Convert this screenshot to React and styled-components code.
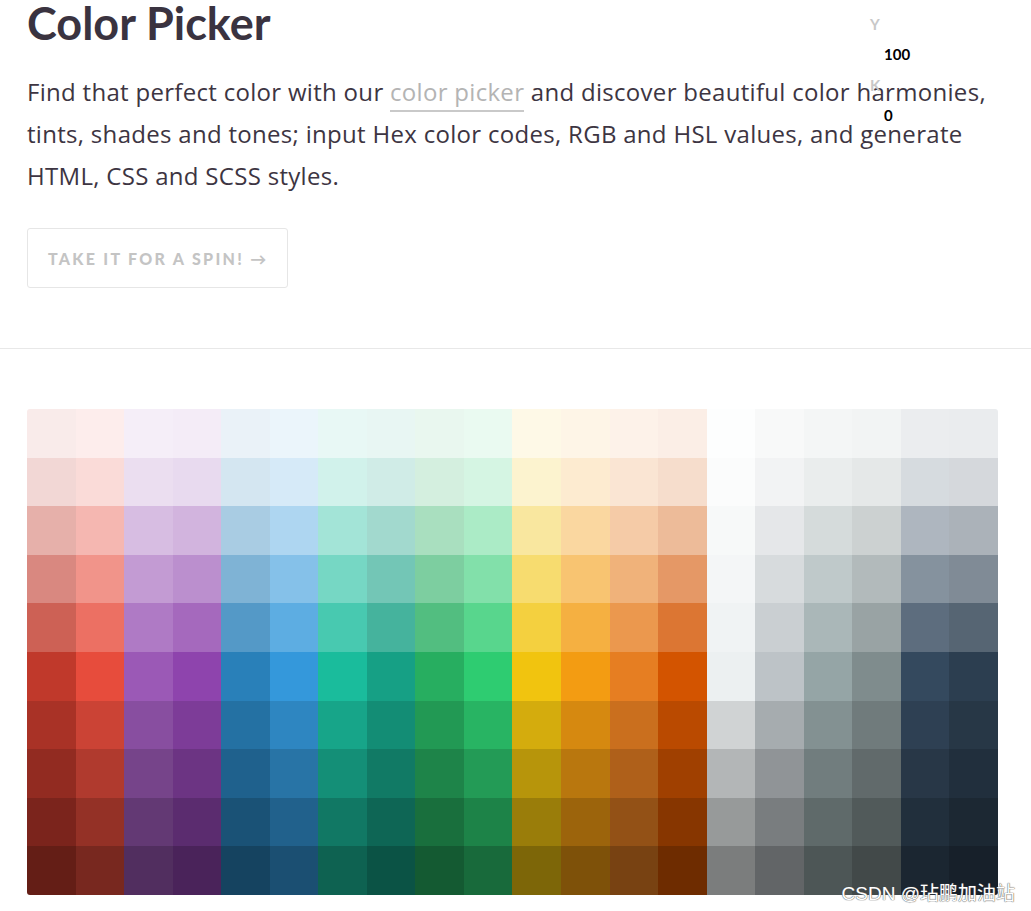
import React from 'react';
import styled, { createGlobalStyle } from 'styled-components';

const GlobalStyle = createGlobalStyle`
  html, body {
    margin: 0;
    padding: 0;
    background: #fff;
  }
  body {
    font-family: 'Open Sans', Lato, sans-serif;
    color: #3b3441;
    overflow: hidden;
  }
`;

// flat ui base colours, in the order shown on the page
const BASES = [
  '#c0392b', '#e74c3c', '#9b59b6', '#8e44ad', '#2980b9', '#3498db', '#1abc9c', '#16a085', '#27ae60', '#2ecc71',
  '#f1c40f', '#f39c12', '#e67e22', '#d35400', '#ecf0f1', '#bdc3c7', '#95a5a6', '#7f8c8d', '#34495e', '#2c3e50',
];

// 50..400 are tints toward white, 600..900 shades toward black
const STEPS = [
  { tint: 0.9 }, { tint: 0.8 }, { tint: 0.6 }, { tint: 0.4 }, { tint: 0.2 },
  { tint: 0 }, { shade: 0.88 }, { shade: 0.76 }, { shade: 0.64 }, { shade: 0.52 },
];

const mix = (hex, step) => {
  const n = parseInt(hex.slice(1), 16);
  const rgb = [(n >> 16) & 255, (n >> 8) & 255, n & 255].map(c =>
    step.shade ? Math.round(c * step.shade) : Math.round(c + (255 - c) * step.tint)
  );
  return `rgb(${rgb.join(',')})`;
};

// the CMYK readout that sticks out over the intro text
const CHANNELS = [
  { label: 'Y', value: '100' },
  { label: 'K', value: '0' },
];

export default function App() {
  return (
    <Page>
      <GlobalStyle />
      <Intro>
        <Title>Color Picker</Title>
        <Lead>
          Find that perfect color with our <Link>color picker</Link> and discover beautiful color harmonies,
          <br />
          tints, shades and tones; input Hex color codes, RGB and HSL values, and generate
          <br />
          HTML, CSS and SCSS styles.
        </Lead>
        <SpinButton>Take it for a spin! →</SpinButton>

        <Readout>
          {CHANNELS.map(ch => (
            <Channel key={ch.label}>
              <ChannelLabel>{ch.label}</ChannelLabel>
              <ChannelValue>{ch.value}</ChannelValue>
            </Channel>
          ))}
        </Readout>
      </Intro>

      <Divider />

      <Palette>
        <Swatches>
          {STEPS.map((step, r) =>
            BASES.map((base, c) => <Swatch key={`${r}-${c}`} style={{ background: mix(base, step) }} />)
          )}
        </Swatches>
        <Watermark>CSDN @玷鹏加油站</Watermark>
      </Palette>
    </Page>
  );
}

const Page = styled.div`
  width: 1031px;
  min-height: 911px;
  display: flex;
  flex-direction: column;
`;

const Intro = styled.section`
  position: relative;
  display: flex;
  flex-direction: column;
  align-items: flex-start;
  padding: 0 0 60px 27px;
`;

const Title = styled.h1`
  margin: 0;
  padding-top: 1px;
  font-family: Lato, sans-serif;
  font-size: 45px;
  line-height: 44px;
  font-weight: 700;
  color: #3a3340;
`;

const Lead = styled.p`
  margin: 26px 0 0;
  font-size: 24px;
  line-height: 42px;
  color: #3d3542;
  white-space: nowrap;
  letter-spacing: 0.3px;
`;

const Link = styled.span`
  color: #b4b4b4;
  border-bottom: 2px solid #c9c9c9;
  padding-bottom: 2px;
`;

const SpinButton = styled.button`
  display: flex;
  align-items: center;
  margin-top: 31px;
  height: 60px;
  width: 261px;
  padding: 0 0 0 20px;
  background: #fff;
  border: 1px solid #e6e6e6;
  border-radius: 3px;
  font-family: Lato, sans-serif;
  font-size: 16px;
  font-weight: 900;
  letter-spacing: 2.3px;
  text-transform: uppercase;
  color: #c4c4c4;
  cursor: pointer;
`;

const Readout = styled.div`
  position: absolute;
  top: 15px;
  left: 870px;
  display: flex;
  flex-direction: column;
  gap: 13px;
`;

const Channel = styled.div`
  display: flex;
  flex-direction: column;
  gap: 12px;
  font-family: Lato, sans-serif;
  font-weight: 700;
  font-size: 15px;
  line-height: 18px;
`;

const ChannelLabel = styled.span`
  color: #c8c8c8;
`;

const ChannelValue = styled.span`
  color: #000;
  padding-left: 14px;
`;

const Divider = styled.hr`
  margin: 0;
  border: 0;
  border-top: 1px solid #e8e8e8;
`;

const Palette = styled.section`
  position: relative;
  padding: 60px 0 0 27px;
`;

const Swatches = styled.div`
  display: grid;
  grid-template-columns: repeat(20, 1fr);
  grid-auto-rows: 48.6px;
  width: 971px;
  border-radius: 3px;
  overflow: hidden;
`;

const Swatch = styled.div``;

const Watermark = styled.span`
  position: absolute;
  right: 16px;
  top: 529px;
  font-family: 'Liberation Sans', 'Noto Sans CJK SC', sans-serif;
  font-size: 19px;
  color: #fff;
  text-shadow: 0 0 1px #555, 0 0 1px #555;
`;
